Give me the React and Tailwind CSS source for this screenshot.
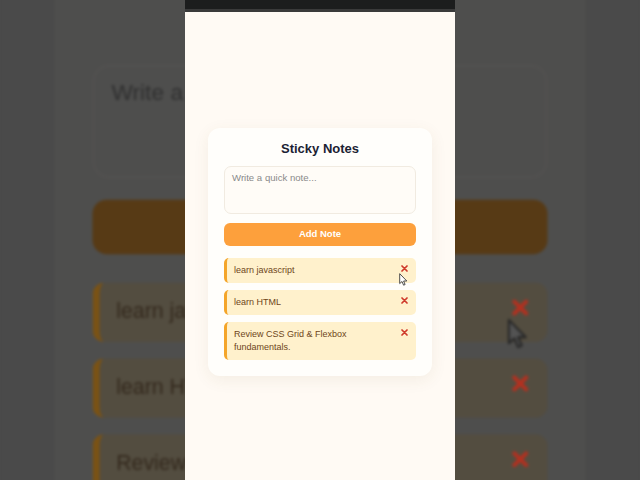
import React from "react";

const notes = [
  { id: 1, text: "learn javascript" },
  { id: 2, text: "learn HTML" },
  { id: 3, text: "Review CSS Grid & Flexbox fundamentals." },
];

const LIGHT = {
  page: "bg-[#fffaf4]",
  card: "bg-[#fffefb] shadow-[0_4px_16px_rgba(120,90,40,0.08)]",
  title: "text-[#1b2233]",
  area: "border-[#f1ebe1] bg-[#fffcf7] text-[#8a8a8a]",
  btn: "bg-[#fda03c] text-white",
  note: "border-[#f4a52a] bg-[#fff1cc]",
  noteText: "text-[#6e4519]",
  x: "#cf3a2b",
  curFill: "#ffffff",
  curStroke: "#3a3a3a",
};

const DIM = {
  page: "bg-[#4a4a4a]",
  card: "bg-[#4e4e4d]",
  title: "text-[#262830]",
  area: "border-[#525150] bg-[#4e4e4d] text-[#2f2f2f]",
  btn: "bg-[#573a15] text-[#5a4a38]",
  note: "border-[#7a5214] bg-[#534d40]",
  noteText: "text-[#33281c]",
  x: "#b3301f",
  curFill: "#535353",
  curStroke: "#262626",
};

function XIcon({ color }) {
  return (
    <svg width="7" height="7" viewBox="0 0 7 7" className="block">
      <path d="M1 1 L6 6 M6 1 L1 6" stroke={color} strokeWidth="1.7" strokeLinecap="round" />
    </svg>
  );
}

function Cursor({ fill, stroke }) {
  return (
    <svg width="9" height="13" viewBox="0 0 9 13" className="block">
      <path
        d="M0.7 0.7 L0.7 10.6 L3 8.5 L4.6 12.2 L6.1 11.5 L4.6 8 L7.8 8 Z"
        fill={fill}
        stroke={stroke}
        strokeWidth="0.9"
        strokeLinejoin="round"
      />
    </svg>
  );
}

function Column({ showBar, t }) {
  return (
    <div className={"relative mx-auto w-[270px] h-[480px] flex flex-col " + t.page} style={{ fontFamily: '"Liberation Sans", Arial, sans-serif' }}>
      {showBar ? (
        <div className="flex flex-col">
          <div className="h-[9px] bg-[#1c1d1d]" />
          <div className="h-[3px] bg-[#3a3a3a]" />
        </div>
      ) : (
        <div className="h-[12px]" />
      )}
      <div className="pt-[116px] flex justify-center">
        <div className={"relative w-[224px] rounded-[12px] px-4 pt-[13px] pb-4 flex flex-col " + t.card}>
          <div className={"text-center text-[13px] leading-[16px] font-bold mb-[9px] " + t.title}>Sticky Notes</div>
          <div className={"h-[48px] rounded-[7px] border px-[7px] pt-[5px] text-[9.6px] leading-[12px] " + t.area}>
            Write a quick note...
          </div>
          <div className={"mt-[9px] h-[23px] rounded-[6px] flex items-center justify-center text-[9.5px] font-bold " + t.btn}>
            Add Note
          </div>
          <div className="mt-[12px] flex flex-col gap-[7px]">
            {notes.map((n) => (
              <div key={n.id} className={"flex items-start justify-between rounded-[5px] border-l-[3px] pl-[7px] pr-[8px] py-[6px] " + t.note}>
                <div className={"text-[9px] leading-[13px] w-[150px] " + t.noteText}>{n.text}</div>
                <div className="h-[13px] flex items-center -mt-[2px]">
                  <XIcon color={t.x} />
                </div>
              </div>
            ))}
          </div>
          <div className="absolute left-[191px] top-[145px]">
            <Cursor fill={t.curFill} stroke={t.curStroke} />
          </div>
        </div>
      </div>
    </div>
  );
}

export default function App() {
  return (
    <div className="relative w-[640px] h-[480px] overflow-hidden bg-[#4a4a4a]">
      <div className="absolute left-0 top-0 w-[640px] h-[480px] origin-center scale-[2.37] blur-[0.6px]">
        <Column showBar={false} t={DIM} />
      </div>
      <div className="relative">
        <Column showBar={true} t={LIGHT} />
      </div>
    </div>
  );
}
